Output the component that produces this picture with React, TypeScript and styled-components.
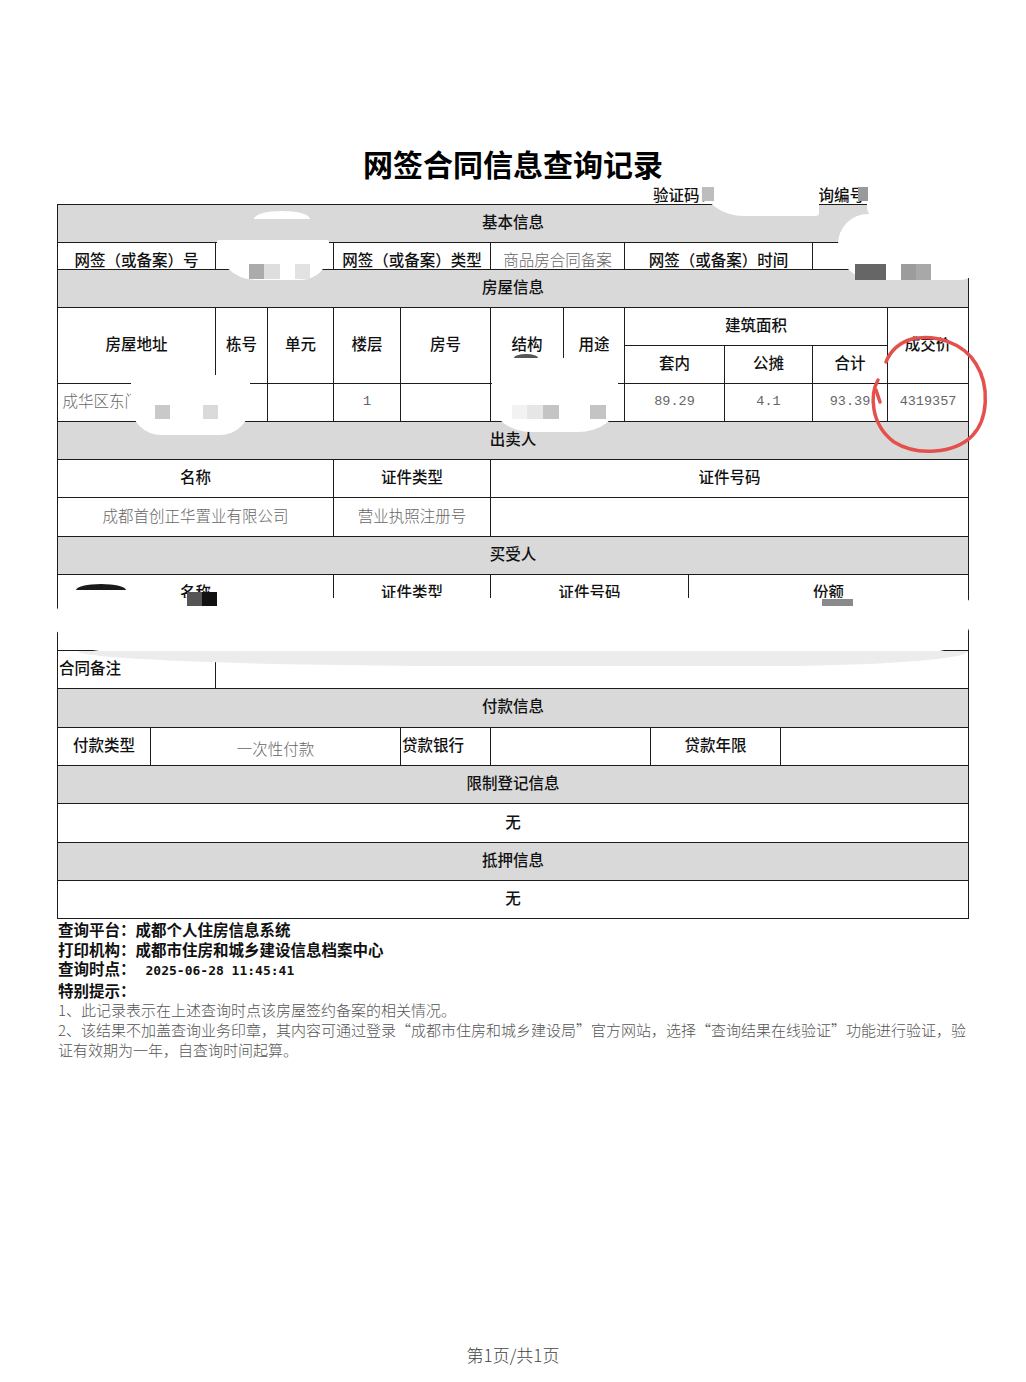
import React from "react";
import styled, { createGlobalStyle } from "styled-components";

const LINE = "#1c1c1c";
const BAND = "#d9d9d9";
const SANS = `"Noto Sans CJK SC", "Noto Sans", sans-serif`;
const MONO = `"Liberation Mono", "Noto Sans CJK SC", monospace`;

const GlobalStyle = createGlobalStyle`
  html, body { margin: 0; padding: 0; background: #ffffff; }
  body { font-family: ${SANS}; color: #111; }
`;

const Page = styled.div`
  position: relative;
  width: 1026px;
  min-height: 1382px;
  box-sizing: border-box;
  padding-top: 145px;
  padding-bottom: 17px;
  display: flex;
  flex-direction: column;
  overflow: hidden;
  background: #fff;
`;

const Title = styled.h1`
  margin: 0;
  height: 40px;
  line-height: 37px;
  text-align: center;
  font-family: ${SANS};
  font-size: 30px;
  font-weight: 700;
  color: #000;
`;

const CodeLine = styled.div`
  display: flex;
  height: 19px;
  padding-left: 653px;
  font-size: 15.5px;
  line-height: 19px;
  font-weight: 500;
  color: #111;
`;

const CodeLabel = styled.span<{ $w?: number }>`
  display: inline-block;
  width: ${(p) => (p.$w ? `${p.$w}px` : "auto")};
  white-space: nowrap;
`;

const Table = styled.div`
  margin-left: 57px;
  width: 912px;
  box-sizing: border-box;
  border-left: 1px solid ${LINE};
  border-top: 1px solid ${LINE};
`;

const Band = styled.div<{ $h?: number }>`
  height: ${(p) => p.$h ?? 38}px;
  box-sizing: border-box;
  background: ${BAND};
  border-right: 1px solid ${LINE};
  border-bottom: 1px solid ${LINE};
  display: flex;
  align-items: center;
  justify-content: center;
  font-size: 15.5px;
  font-weight: 500;
  color: #111;
  padding-bottom: 6px;
`;

const Row = styled.div<{ $cols: string; $h?: number }>`
  display: grid;
  grid-template-columns: ${(p) => p.$cols};
  height: ${(p) => p.$h ?? 38}px;
`;

const HouseGrid = styled.div`
  display: grid;
  grid-template-columns: 158px 52px 66px 67px 90px 73px 61px 100px 88px 75px 81px;
  grid-template-rows: 38px 38px 38px;
`;

type Kind = "label" | "value" | "num";

const Cell = styled.div<{
  $kind?: Kind;
  $align?: "start" | "center";
  $v?: "center" | "end";
  $col?: string;
  $row?: string;
  $drop?: number;
}>`
  box-sizing: border-box;
  border-right: 1px solid ${LINE};
  border-bottom: 1px solid ${LINE};
  display: flex;
  align-items: ${(p) => (p.$v === "end" ? "flex-end" : "center")};
  justify-content: ${(p) => (p.$align === "start" ? "flex-start" : "center")};
  padding-top: ${(p) => (p.$drop ? `${p.$drop}px` : "0")};
  padding-left: ${(p) => (p.$align === "start" ? "1px" : "0")};
  padding-bottom: ${(p) => (p.$v === "end" ? "0" : p.$kind === "num" ? "2px" : "5px")};
  grid-column: ${(p) => p.$col ?? "auto"};
  grid-row: ${(p) => p.$row ?? "auto"};
  white-space: nowrap;
  overflow: hidden;
  font-family: ${(p) => (p.$kind === "num" ? MONO : SANS)};
  font-size: ${(p) => (p.$kind === "num" ? "13.5px" : "15.5px")};
  font-weight: ${(p) => (p.$kind === "label" || !p.$kind ? 500 : 300)};
  color: ${(p) => (p.$kind === "label" || !p.$kind ? "#111" : "#666")};
  line-height: 20px;
`;

const Info = styled.div`
  margin-left: 58px;
  width: 915px;
  padding-top: 1px;
`;

const InfoLine = styled.div`
  font-size: 15.5px;
  line-height: 19.6px;
  font-weight: 700;
  color: #111;
  white-space: nowrap;
`;

const Stamp = styled.span`
  margin-left: 10px;
  font-family: "DejaVu Sans Mono", monospace;
  font-size: 13px;
  font-weight: 700;
`;

const Note = styled.div`
  font-size: 15px;
  line-height: 19.6px;
  font-weight: 300;
  color: #555;
  white-space: nowrap;
`;

const PageNo = styled.div`
  margin-top: auto;
  text-align: center;
  font-size: 17px;
  line-height: 20px;
  color: #444;
  font-weight: 300;
`;

/* overlays: redaction smudges and mosaic pixels lying over the scan */
const Smudge = styled.div<{
  $x: number;
  $y: number;
  $w: number;
  $h: number;
  $r?: string;
  $bg?: string;
}>`
  position: absolute;
  left: ${(p) => p.$x}px;
  top: ${(p) => p.$y}px;
  width: ${(p) => p.$w}px;
  height: ${(p) => p.$h}px;
  border-radius: ${(p) => p.$r ?? "12px"};
  background: ${(p) => p.$bg ?? "#ffffff"};
`;

const Pixel = styled.div<{ $x: number; $y: number; $w: number; $h: number; $c: string }>`
  position: absolute;
  left: ${(p) => p.$x}px;
  top: ${(p) => p.$y}px;
  width: ${(p) => p.$w}px;
  height: ${(p) => p.$h}px;
  background: ${(p) => p.$c};
`;

const Ink = styled.svg`
  position: absolute;
  left: 862px;
  top: 328px;
  width: 134px;
  height: 134px;
  overflow: visible;
`;

export default function App() {
  return (
    <>
      <GlobalStyle />
      <Page>
        <Title>网签合同信息查询记录</Title>
        <CodeLine>
          <CodeLabel $w={150}>验证码：</CodeLabel>
          <CodeLabel>查询编号：</CodeLabel>
        </CodeLine>

        <Table>
          <Band>基本信息</Band>
          <Row $cols="158px 118px 157px 134px 188px 1fr" $h={27}>
            <Cell $kind="label" $v="end">网签（或备案）号</Cell>
            <Cell $kind="value" $v="end"></Cell>
            <Cell $kind="label" $v="end">网签（或备案）类型</Cell>
            <Cell $kind="value" $v="end">商品房合同备案</Cell>
            <Cell $kind="label" $v="end">网签（或备案）时间</Cell>
            <Cell $kind="value" $v="end"></Cell>
          </Row>

          <Band>房屋信息</Band>
          <HouseGrid>
            <Cell $kind="label" $col="1" $row="1 / 3">房屋地址</Cell>
            <Cell $kind="label" $col="2" $row="1 / 3">栋号</Cell>
            <Cell $kind="label" $col="3" $row="1 / 3">单元</Cell>
            <Cell $kind="label" $col="4" $row="1 / 3">楼层</Cell>
            <Cell $kind="label" $col="5" $row="1 / 3">房号</Cell>
            <Cell $kind="label" $col="6" $row="1 / 3">结构</Cell>
            <Cell $kind="label" $col="7" $row="1 / 3">用途</Cell>
            <Cell $kind="label" $col="8 / 11" $row="1">建筑面积</Cell>
            <Cell $kind="label" $col="11" $row="1 / 3">成交价</Cell>
            <Cell $kind="label" $col="8" $row="2">套内</Cell>
            <Cell $kind="label" $col="9" $row="2">公摊</Cell>
            <Cell $kind="label" $col="10" $row="2">合计</Cell>

            <Cell $kind="value" $align="start" $col="1" $row="3">&nbsp;成华区东门</Cell>
            <Cell $kind="value" $col="2" $row="3"></Cell>
            <Cell $kind="value" $col="3" $row="3"></Cell>
            <Cell $kind="num" $col="4" $row="3">1</Cell>
            <Cell $kind="value" $col="5" $row="3"></Cell>
            <Cell $kind="value" $col="6" $row="3"></Cell>
            <Cell $kind="value" $col="7" $row="3"></Cell>
            <Cell $kind="num" $col="8" $row="3">89.29</Cell>
            <Cell $kind="num" $col="9" $row="3">4.1</Cell>
            <Cell $kind="num" $col="10" $row="3">93.39</Cell>
            <Cell $kind="num" $col="11" $row="3">4319357</Cell>
          </HouseGrid>

          <Band>出卖人</Band>
          <Row $cols="276px 157px 1fr">
            <Cell $kind="label">名称</Cell>
            <Cell $kind="label">证件类型</Cell>
            <Cell $kind="label">证件号码</Cell>
          </Row>
          <Row $cols="276px 157px 1fr" $h={39}>
            <Cell $kind="value">成都首创正华置业有限公司</Cell>
            <Cell $kind="value">营业执照注册号</Cell>
            <Cell $kind="value"></Cell>
          </Row>

          <Band>买受人</Band>
          <Row $cols="276px 157px 198px 1fr">
            <Cell $kind="label">名称</Cell>
            <Cell $kind="label">证件类型</Cell>
            <Cell $kind="label">证件号码</Cell>
            <Cell $kind="label">份额</Cell>
          </Row>
          <Row $cols="276px 157px 198px 1fr">
            <Cell $kind="value"></Cell>
            <Cell $kind="value"></Cell>
            <Cell $kind="value"></Cell>
            <Cell $kind="value"></Cell>
          </Row>
          <Row $cols="158px 1fr">
            <Cell $kind="label" $align="start">合同备注</Cell>
            <Cell $kind="value"></Cell>
          </Row>

          <Band $h={39}>付款信息</Band>
          <Row $cols="93px 250px 90px 160px 130px 1fr">
            <Cell $kind="label">付款类型</Cell>
            <Cell $kind="value" $drop={8}>一次性付款</Cell>
            <Cell $kind="label" $align="start">贷款银行</Cell>
            <Cell $kind="value"></Cell>
            <Cell $kind="label">贷款年限</Cell>
            <Cell $kind="value"></Cell>
          </Row>

          <Band>限制登记信息</Band>
          <Row $cols="1fr" $h={39}>
            <Cell $kind="label">无</Cell>
          </Row>
          <Band>抵押信息</Band>
          <Row $cols="1fr">
            <Cell $kind="label">无</Cell>
          </Row>
        </Table>

        <Info>
          <InfoLine>查询平台：成都个人住房信息系统</InfoLine>
          <InfoLine>打印机构：成都市住房和城乡建设信息档案中心</InfoLine>
          <InfoLine>
            查询时点：<Stamp>2025-06-28 11:45:41</Stamp>
          </InfoLine>
          <InfoLine>特别提示：</InfoLine>
          <Note>1、此记录表示在上述查询时点该房屋签约备案的相关情况。</Note>
          <Note>
            2、该结果不加盖查询业务印章，其内容可通过登录“成都市住房和城乡建设局”官方网站，选择“查询结果在线验证”功能进行验证，验
          </Note>
          <Note>证有效期为一年，自查询时间起算。</Note>
        </Info>

        <PageNo>第1页/共1页</PageNo>

        {/* redaction smudges over the scan */}
        <Smudge $x={703} $y={182} $w={116} $h={34} $r="4px 4px 4px 40% / 4px 4px 4px 100%" />
        <Pixel $x={702} $y={187} $w={12} $h={14} $c="#bdbdbd" />
        <Smudge $x={867} $y={180} $w={113} $h={42} $r="16px" />
        <Pixel $x={858} $y={187} $w={10} $h={14} $c="#9a9a9a" />
        <Smudge $x={838} $y={214} $w={142} $h={66} $r="30px 12px 20px 36px" />
        <Pixel $x={855} $y={264} $w={31} $h={16} $c="#666666" />
        <Pixel $x={901} $y={264} $w={15} $h={16} $c="#9c9c9c" />
        <Pixel $x={916} $y={264} $w={15} $h={16} $c="#a8a8a8" />

        <Smudge $x={254} $y={211} $w={56} $h={8} $r="50% 50% 50% 50% / 100% 100% 0 0" />
        <Smudge $x={217} $y={240} $w={112} $h={40} $r="2px 2px 30px 40px" />
        <Pixel $x={249} $y={264} $w={15} $h={15} $c="#ababab" />
        <Pixel $x={264} $y={264} $w={16} $h={15} $c="#dedede" />
        <Pixel $x={295} $y={264} $w={15} $h={15} $c="#e2e2e2" />

        <Smudge $x={131} $y={375} $w={119} $h={60} $r="8px 8px 30px 30px" />
        <Pixel $x={155} $y={405} $w={15} $h={14} $c="#c9c9c9" />
        <Pixel $x={203} $y={405} $w={15} $h={14} $c="#dadada" />

        <Smudge $x={514} $y={354} $w={24} $h={4} $bg="#555555" $r="50% 50% 0 0 / 100% 100% 0 0" />
        <Smudge $x={492} $y={358} $w={126} $h={74} $r="30px 40px 40px 40px / 20px 20px 30px 30px" />
        <Pixel $x={512} $y={405} $w={15} $h={14} $c="#f2f2f2" />
        <Pixel $x={527} $y={405} $w={16} $h={14} $c="#e6e6e6" />
        <Pixel $x={543} $y={405} $w={16} $h={14} $c="#c4c4c4" />
        <Pixel $x={590} $y={405} $w={16} $h={14} $c="#c4c4c4" />

        <Smudge $x={76} $y={584} $w={50} $h={6} $bg="#1a1a1a" $r="50% 50% 0 0 / 100% 100% 0 0" />
        <Smudge $x={54} $y={598} $w={916} $h={54} $r="30px 6px 40px 60px / 20px 6px 30px 30px" />
        <Smudge $x={78} $y={651} $w={890} $h={15} $bg="#ececec" $r="0 0 200px 400px / 0 0 15px 15px" />
        <Pixel $x={187} $y={592} $w={15} $h={14} $c="#555555" />
        <Pixel $x={202} $y={592} $w={15} $h={14} $c="#111111" />
        <Pixel $x={822} $y={599} $w={31} $h={7} $c="#8a8a8a" />

        <Ink viewBox="0 0 134 134">
          <path
            d="M 16 52 C 8 66, 8 96, 32 114 C 54 128, 92 126, 110 108 C 126 92, 128 58, 114 36 C 101 14, 72 6, 50 11 C 36 15, 28 24, 24 34"
            fill="none"
            stroke="#e4504c"
            strokeWidth="3.5"
            strokeLinecap="round"
          />
          <path d="M 14 62 L 18 74" fill="none" stroke="#e4504c" strokeWidth="3.5" strokeLinecap="round" />
        </Ink>
      </Page>
    </>
  );
}
